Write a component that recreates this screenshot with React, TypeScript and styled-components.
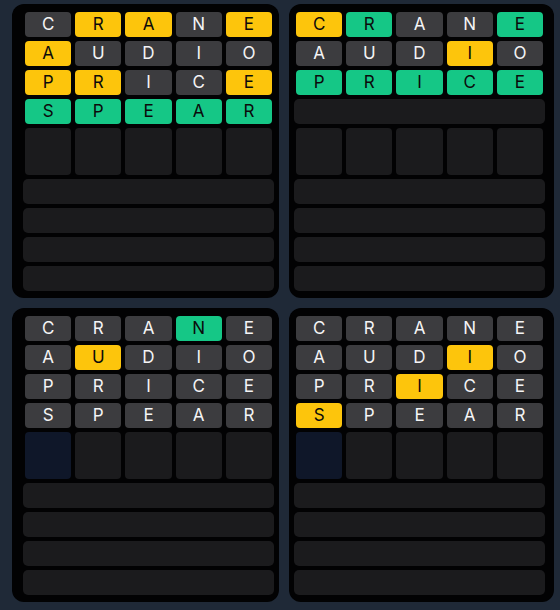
import React from 'react';
import styled, { createGlobalStyle } from 'styled-components';

type Mark = 'g' | 'y' | 'x';

const GlobalStyle = createGlobalStyle`
  html, body {
    margin: 0;
    padding: 0;
    background: #1f2937;
  }
  body {
    font-family: Inter, 'Liberation Sans', Arial, sans-serif;
  }
`;

const Page = styled.div`
  display: grid;
  grid-template-columns: 267px 265px;
  align-content: start;
  column-gap: 10px;
  row-gap: 10px;
  padding: 4px 0 0 12px;
  min-height: 610px;
  box-sizing: border-box;
  background: #1f2937;
`;

const Panel = styled.div<{ $side: 'left' | 'right' }>`
  background: #020203;
  border-radius: 12px;
  padding: ${(p) => (p.$side === 'left' ? '8px 7px 7px 13px' : '8px 10px 7px 7px')};
  display: flex;
  flex-direction: column;
  gap: 4px;
`;

const Row = styled.div`
  display: grid;
  grid-template-columns: repeat(5, 1fr);
  column-gap: 4px;
  width: 247px;
`;

const colors: Record<Mark, { bg: string; fg: string }> = {
  g: { bg: '#15c786', fg: '#0b0b0b' },
  y: { bg: '#fdc50c', fg: '#0b0b0b' },
  x: { bg: '#3c3c3f', fg: '#f4f4f5' },
};

const Tile = styled.div<{ $mark: Mark }>`
  height: 25px;
  border-radius: 4px;
  background: ${(p) => colors[p.$mark].bg};
  color: ${(p) => colors[p.$mark].fg};
  display: flex;
  align-items: center;
  justify-content: center;
  font-size: 17px;
  font-weight: 400;
  line-height: 1;
`;

const InputTile = styled.div<{ $cursor?: boolean }>`
  height: 47px;
  border-radius: 4px;
  background: ${(p) => (p.$cursor ? '#0f1729' : '#1b1b1d')};
`;

const Bar = styled.div`
  height: 25px;
  margin: 0 -2px;
  width: 251px;
  border-radius: 5px;
  background: #1b1b1d;
`;

type Guess = { word: string; marks: string };

const boards: { side: 'left' | 'right'; guesses: Guess[]; cursor: boolean }[] = [
  {
    side: 'left',
    guesses: [
      { word: 'CRANE', marks: 'xyyxy' },
      { word: 'AUDIO', marks: 'yxxxx' },
      { word: 'PRICE', marks: 'yyxxy' },
      { word: 'SPEAR', marks: 'ggggg' },
    ],
    cursor: false,
  },
  {
    side: 'right',
    guesses: [
      { word: 'CRANE', marks: 'ygxxg' },
      { word: 'AUDIO', marks: 'xxxyx' },
      { word: 'PRICE', marks: 'ggggg' },
    ],
    cursor: false,
  },
  {
    side: 'left',
    guesses: [
      { word: 'CRANE', marks: 'xxxgx' },
      { word: 'AUDIO', marks: 'xyxxx' },
      { word: 'PRICE', marks: 'xxxxx' },
      { word: 'SPEAR', marks: 'xxxxx' },
    ],
    cursor: true,
  },
  {
    side: 'right',
    guesses: [
      { word: 'CRANE', marks: 'xxxxx' },
      { word: 'AUDIO', marks: 'xxxyx' },
      { word: 'PRICE', marks: 'xxyxx' },
      { word: 'SPEAR', marks: 'yxxxx' },
    ],
    cursor: true,
  },
];

const TOTAL_ROWS = 9;
const INPUT_ROW = 4;

const Board = ({ side, guesses, cursor }: { side: 'left' | 'right'; guesses: Guess[]; cursor: boolean }) => {
  const rows: React.ReactNode[] = [];
  for (let i = 0; i < TOTAL_ROWS; i++) {
    const g = guesses[i];
    if (g) {
      rows.push(
        <Row key={i}>
          {g.word.split('').map((ch, j) => (
            <Tile key={j} $mark={g.marks[j] as Mark}>
              {ch}
            </Tile>
          ))}
        </Row>
      );
    } else if (i === INPUT_ROW) {
      rows.push(
        <Row key={i}>
          {[0, 1, 2, 3, 4].map((j) => (
            <InputTile key={j} $cursor={cursor && j === 0} />
          ))}
        </Row>
      );
    } else {
      rows.push(<Bar key={i} />);
    }
  }
  return <Panel $side={side}>{rows}</Panel>;
};

export default function App() {
  return (
    <>
      <GlobalStyle />
      <Page>
        {boards.map((b, i) => (
          <Board key={i} side={b.side} guesses={b.guesses} cursor={b.cursor} />
        ))}
      </Page>
    </>
  );
}
